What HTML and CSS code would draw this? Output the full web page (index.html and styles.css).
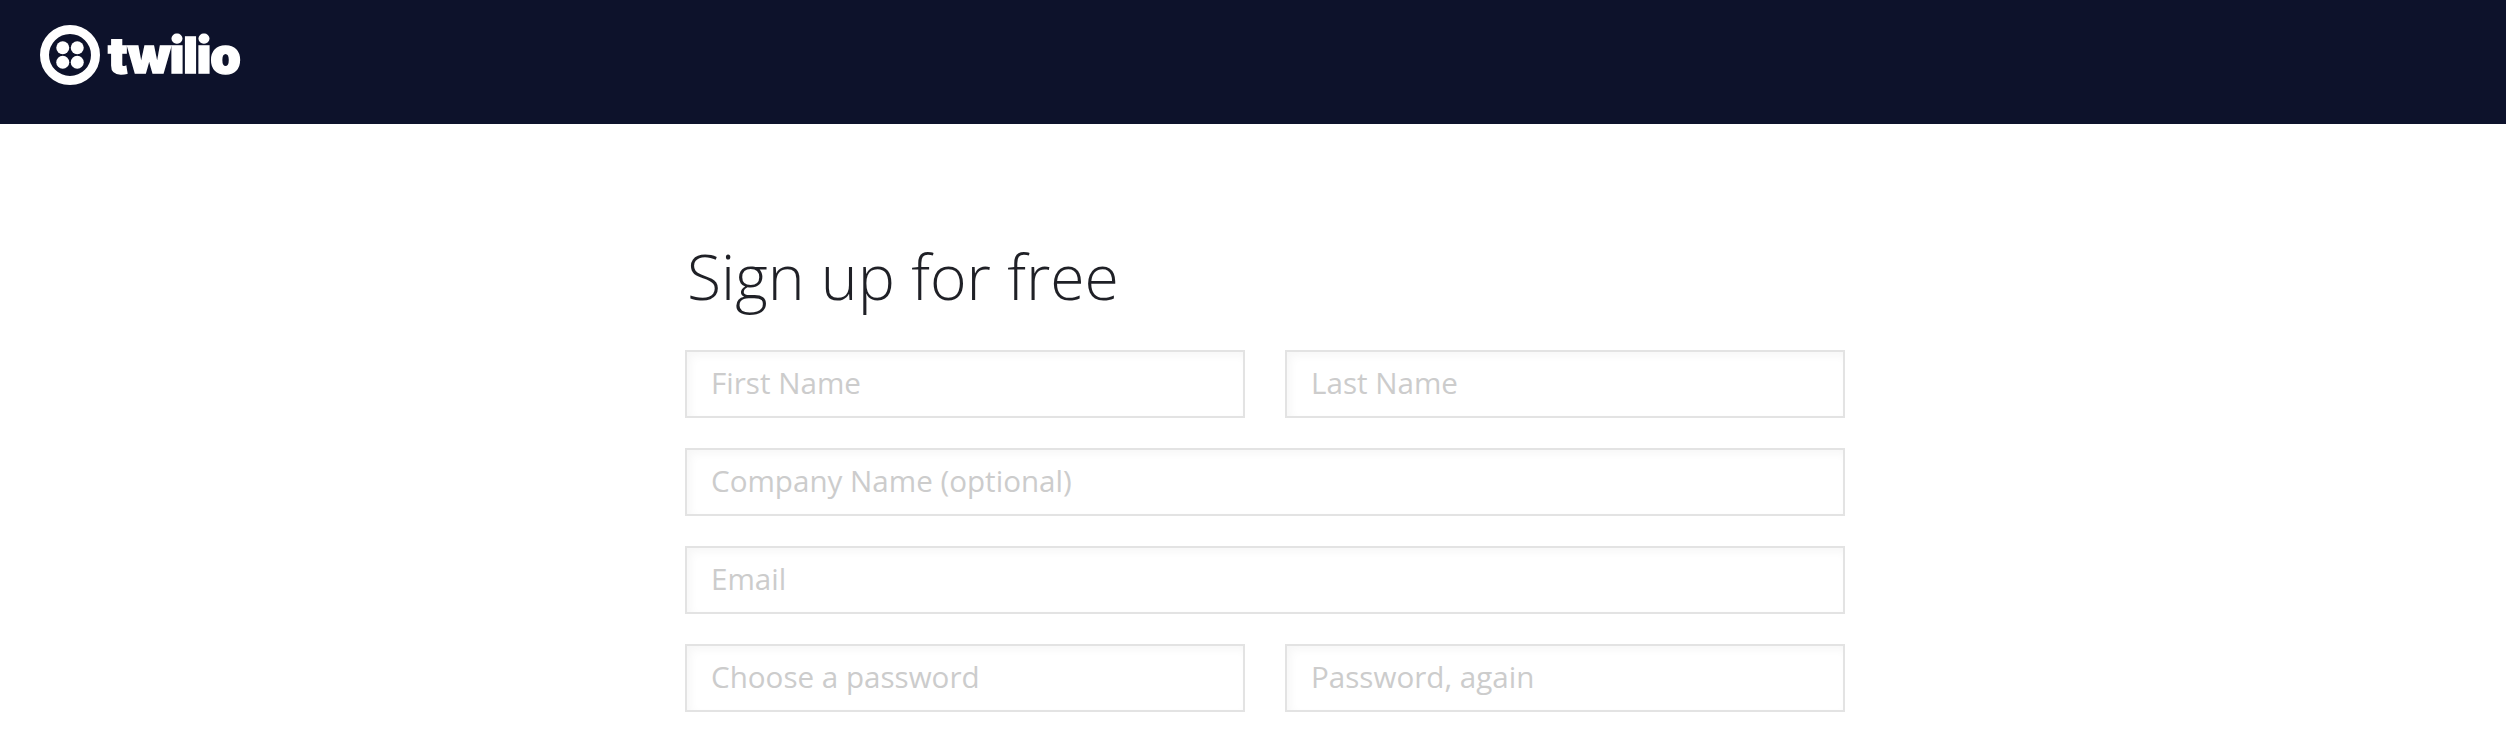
FILE: index.html
```html
<!DOCTYPE html>
<html lang="en">
<head>
    <meta charset="UTF-8">
    <meta name="viewport" content="width=device-width, initial-scale=1.0">
    <title>Sign up for free</title>
    <link rel="stylesheet" href="styles.css">
</head>
<body>

<header class="topbar">
    <a class="logo" href="#">
        <svg class="logo-mark" viewBox="0 0 60 60" width="60" height="60" aria-hidden="true">
            <circle cx="30" cy="30" r="25.5" fill="none" stroke="#fff" stroke-width="9"/>
            <circle cx="22.75" cy="22.75" r="6.5" fill="#fff"/>
            <circle cx="37.25" cy="22.75" r="6.5" fill="#fff"/>
            <circle cx="22.75" cy="37.25" r="6.5" fill="#fff"/>
            <circle cx="37.25" cy="37.25" r="6.5" fill="#fff"/>
        </svg>
        <span class="logo-text">twilio</span>
    </a>
</header>

<main class="signup">
    <h1 class="signup-title">Sign up for free</h1>
    <form class="signup-form">
        <div class="form-row">
            <input class="field" type="text" placeholder="First Name">
            <input class="field" type="text" placeholder="Last Name">
        </div>
        <div class="form-row">
            <input class="field" type="text" placeholder="Company Name (optional)">
        </div>
        <div class="form-row">
            <input class="field" type="email" placeholder="Email">
        </div>
        <div class="form-row">
            <input class="field" type="password" placeholder="Choose a password">
            <input class="field" type="password" placeholder="Password, again">
        </div>
    </form>
</main>

</body>
</html>
```

FILE: styles.css
```css
body {
    margin: 0;
    background-color: #fff;
    font-family: "Open Sans", Arial, sans-serif;
    overflow: hidden;
}

.topbar {
    height: 124px;
    background-color: #0d122b;
    padding: 23px 0 0 40px;
    box-sizing: border-box;
}

.logo {
    display: flex;
    align-items: center;
    gap: 8px;
    color: #fff;
    text-decoration: none;
}

.logo-text {
    padding-top: 3px;
    font-family: Inter, Arial, sans-serif;
    font-size: 49px;
    font-weight: 900;
    line-height: 60px;
    letter-spacing: -1px;
    -webkit-text-stroke: 1.5px #fff;
}

.signup {
    width: 1160px;
    margin-left: 685px;
    padding-top: 108px;
}

.signup-title {
    margin: 0 0 30px;
    padding-left: 2px;
    font-size: 62.5px;
    font-weight: 300;
    line-height: 88px;
    color: #1f2026;
}

.signup-form {
    display: flex;
    flex-direction: column;
    gap: 30px;
}

.form-row {
    display: flex;
    gap: 40px;
}

.field {
    flex: 1;
    min-width: 0;
    height: 68px;
    box-sizing: border-box;
    padding: 0 24px 3px;
    border: 2px solid #e3e3e3;
    border-radius: 0;
    outline: none;
    box-shadow: inset 4px 4px 8px rgba(0, 0, 0, 0.035);
    font-family: "Open Sans", Arial, sans-serif;
    font-size: 29.6px;
    color: #222;
}

.field::placeholder {
    color: #ccc;
    opacity: 1;
}
```
